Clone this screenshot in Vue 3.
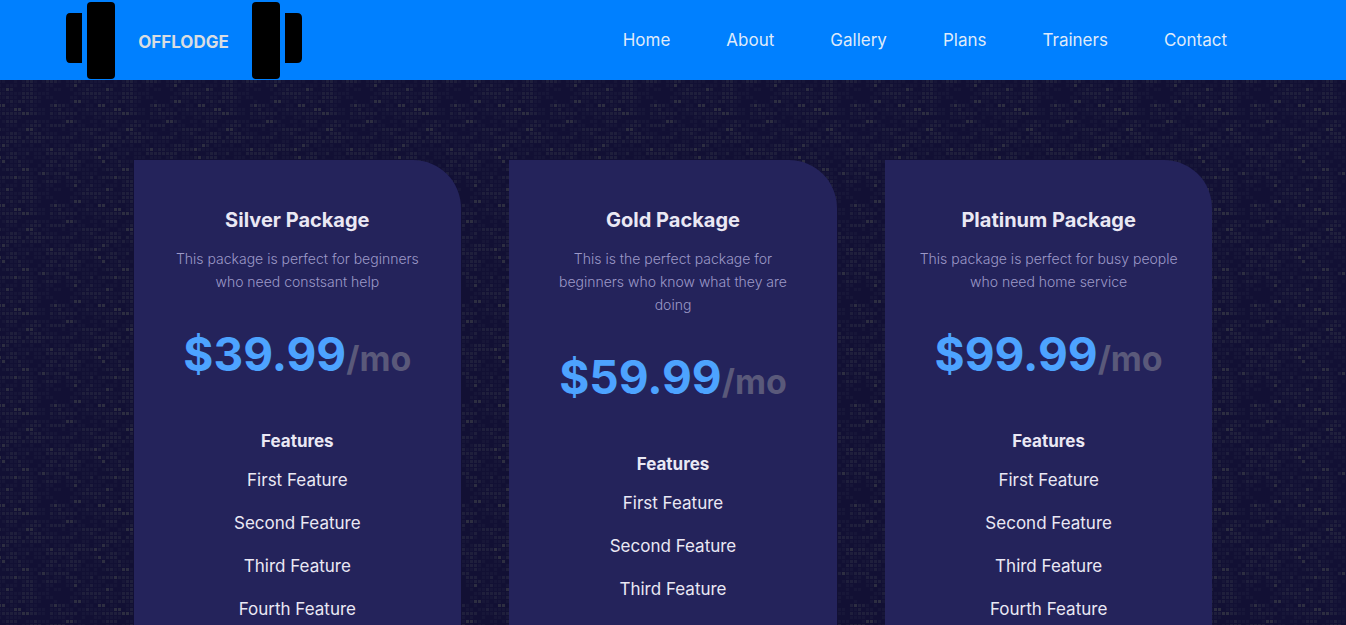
<script setup>
const links = ['Home', 'About', 'Gallery', 'Plans', 'Trainers', 'Contact']
const features = ['First Feature', 'Second Feature', 'Third Feature', 'Fourth Feature']

const plans = [
  { name: 'Silver Package', text: 'This package is perfect for beginners who need constsant help', price: '$39.99' },
  { name: 'Gold Package', text: 'This is the perfect package for beginners who know what they are doing', price: '$59.99' },
  { name: 'Platinum Package', text: 'This package is perfect for busy people who need home service', price: '$99.99' },
]

// Mosaic tile: each digit is the brightness of one 3px square, 0 is empty
const tile = [
  '1001012210122210112210111',
  '0111022211011000113011211',
  '1320011210010110010112111',
  '1111122211110000001122222',
  '1211022221011000011011121',
  '0121221211000100013311011',
  '3011001110002322101001103',
  '1113301211101120110112111',
  '2222233221102122222011121',
  '0111100000001111010010011',
  '1222001121110001332100110',
  '0111011222012222010110010',
  '1100113310110001011122222',
  '0122100222011100012011210',
  '2222202122222112221011122',
  '1222121222101111100011011',
  '3201100100110111012221011',
  '1110111111123122112222232',
  '0122112011022222222011010',
  '1222010011101110121011123',
  '3011211100112201122210011',
  '0111211001022121222101111',
  '1221133110111010112111010',
  '0011011102321222200011110',
  '2223222110010110222011201',
]
const squares = tile.flatMap((row, y) =>
  [...row].map((level, x) => ({ x: x * 4, y: y * 4, level })).filter((s) => s.level !== '0')
)
</script>

<template>
  <div class="page">
    <svg class="mosaic" aria-hidden="true">
      <defs>
        <pattern id="mosaic-tile" x="2" y="80" width="100" height="100" patternUnits="userSpaceOnUse">
          <rect
            v-for="s in squares"
            :key="`${s.x}-${s.y}`"
            :class="`level-${s.level}`"
            :x="s.x"
            :y="s.y"
            width="3"
            height="3"
          />
        </pattern>
      </defs>
      <rect width="100%" height="100%" fill="url(#mosaic-tile)" />
    </svg>

    <header class="bar">
      <a class="logo" href="#">
        <svg class="weight" viewBox="0 0 50 80" aria-hidden="true">
          <path d="M17 13V63H5Q1 63 1 58V18Q1 13 5 13Z" />
          <rect x="22" y="2" width="28" height="77" rx="4" />
        </svg>
        <span>OFFLODGE</span>
        <svg class="weight" viewBox="0 0 50 80" aria-hidden="true">
          <rect x="0" y="2" width="28" height="77" rx="4" />
          <path d="M33 13V63H45Q50 63 50 58V18Q50 13 45 13Z" />
        </svg>
      </a>
      <nav class="menu">
        <a v-for="link in links" :key="link" href="#">{{ link }}</a>
      </nav>
    </header>

    <main class="plans">
      <article v-for="plan in plans" :key="plan.name" class="card">
        <h2>{{ plan.name }}</h2>
        <p class="text">{{ plan.text }}</p>
        <p class="price">{{ plan.price }}<small>/mo</small></p>
        <h3>Features</h3>
        <ul>
          <li v-for="feature in features" :key="feature">{{ feature }}</li>
        </ul>
      </article>
    </main>
  </div>
</template>

<style>
body {
  margin: 0;
  background: #121034;
}
</style>

<style scoped>
.page {
  position: relative;
  min-height: 100vh;
  background: #121034;
  color: #eae8f4;
  font-family: "Inter", "Liberation Sans", sans-serif;
  font-size: 17px;
}

.mosaic {
  position: absolute;
  inset: 0;
  width: 100%;
  height: 100%;
}

.level-1 {
  fill: #171638;
}

.level-2 {
  fill: #1f1f3c;
}

.level-3 {
  fill: #2d2e41;
}

.bar {
  position: relative;
  display: flex;
  align-items: center;
  justify-content: space-between;
  height: 80px;
  padding: 0 119px 0 65px;
  background: #0080ff;
}

.logo {
  display: flex;
  align-items: center;
  color: #d9dde2;
  font-weight: 700;
  text-decoration: none;
}

.logo span {
  width: 137px;
  padding-top: 4px;
  text-align: center;
}

.weight {
  width: 50px;
  height: 80px;
}

.menu {
  display: flex;
  gap: 56px;
}

.menu a {
  color: #dfeafa;
  text-decoration: none;
}

.plans {
  position: relative;
  display: grid;
  grid-template-columns: repeat(3, 1fr);
  gap: 48px;
  max-width: 1079px;
  margin: 0 auto;
  padding: 80px 0;
}

.card {
  padding: 48px 32px;
  border-top-right-radius: 48px;
  background: #24235b;
  text-align: center;
}

h2,
h3,
p,
ul {
  margin: 0;
}

h2 {
  font-size: 20px;
  line-height: 24px;
}

.text {
  margin-top: 15px;
  color: #9c99c8;
  font-size: 14px;
  font-weight: 300;
  line-height: 23px;
}

.price {
  margin-top: 31px;
  color: #4da3ff;
  font-size: 46px;
  font-weight: 700;
  line-height: 60px;
}

.price small {
  color: #5a597a;
  font-size: 34px;
}

h3 {
  margin-top: 40px;
  font-size: 17px;
  line-height: 24px;
}

ul {
  display: grid;
  gap: 16px;
  margin-top: 14px;
  padding: 0;
  line-height: 27px;
  list-style: none;
}
</style>
